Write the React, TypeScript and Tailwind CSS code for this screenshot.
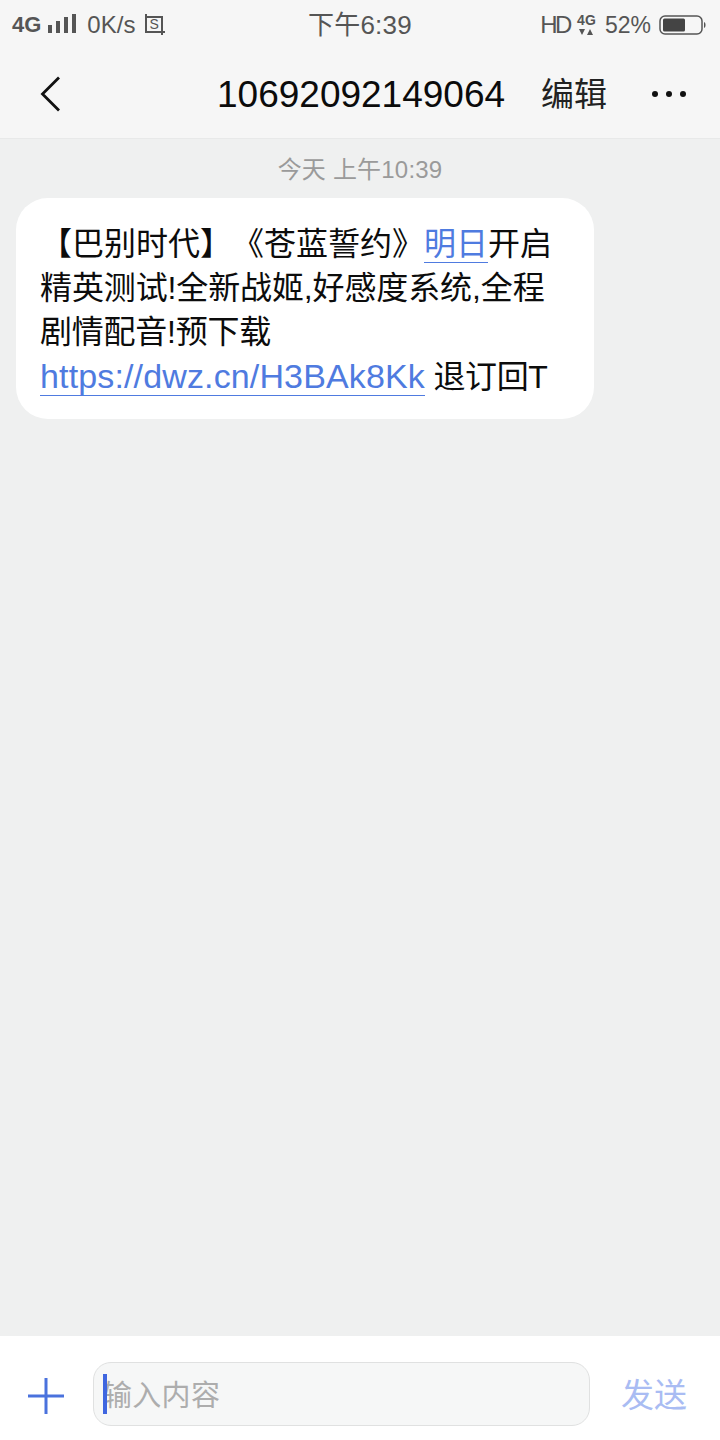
const cjk = "font-['Liberation_Sans','Noto_Sans_CJK_SC',sans-serif] [text-spacing-trim:space-all]";

function SignalBars() {
  return (
    <svg width="29" height="22" viewBox="0 0 29 22" className="fill-[#555555]">
      <rect x="0" y="11" width="4" height="8" />
      <rect x="8" y="7" width="4" height="12" />
      <rect x="16" y="3" width="4" height="16" />
      <rect x="24" y="0" width="4" height="19" />
    </svg>
  );
}

function SimIcon() {
  return (
    <svg width="22" height="24" viewBox="0 0 22 24" fill="none" className="stroke-[#555555]">
      <path d="M2 1v18h19M1 4h17v18" strokeWidth="2" />
      <text x="5.500" y="16" fontSize="14" fontFamily="Liberation Sans" fill="#555555" stroke="none">S</text>
    </svg>
  );
}

function NetworkIcon() {
  return (
    <div className="flex flex-col items-center w-[19px] gap-[3px]">
      <span className="text-[14px] leading-[12px] font-bold text-[#555555]">4G</span>
      <svg width="14" height="7" viewBox="0 0 14 7" className="fill-[#555555]">
        <path d="M0 0h6L3 6zM8 6h6L11 0z" />
      </svg>
    </div>
  );
}

function Battery() {
  return (
    <svg width="48" height="22" viewBox="0 0 48 22" fill="none">
      <rect x="1" y="2" width="42" height="18" rx="5" stroke="#555555" strokeWidth="1.5" />
      <rect x="4" y="4.500" width="22" height="13" rx="1.500" fill="#444444" />
      <path d="M45 8c2 .5 2 5.500 0 6z" fill="#555555" />
    </svg>
  );
}

function StatusBar() {
  return (
    <div className="relative flex items-center justify-between h-[50px] pl-[12px] pr-[13px] text-[#555555]">
      <div className="flex items-center">
        <span className="text-[22px] leading-none font-bold">4G</span>
        <div className="ml-[7px] flex"><SignalBars /></div>
        <span className="ml-[10px] text-[24px] leading-none">0K/s</span>
        <div className="ml-[9px] flex"><SimIcon /></div>
      </div>
      <span className="absolute left-[308px] top-[10px] text-[26px] leading-[30px] tracking-[0.2px]">下午6:39</span>
      <div className="flex items-center">
        <span className="text-[24px] leading-none tracking-[-2.5px]">HD</span>
        <div className="ml-[7px]"><NetworkIcon /></div>
        <span className="ml-[9px] text-[23px] leading-none">52%</span>
        <div className="ml-[8px] flex"><Battery /></div>
      </div>
    </div>
  );
}

function Header() {
  return (
    <div className="flex items-center h-[89px] border-b border-[#e8e9e9]">
      <svg width="24" height="38" viewBox="0 0 24 38" fill="none" className="ml-[39px] stroke-[#111111]">
        <path d="M20 2.500 3.500 19 20 35.500" strokeWidth="2.800" />
      </svg>
      <span className="ml-[154px] mt-[2px] w-[288px] text-[37px] leading-[44px] text-[#0b0b0b]">10692092149064</span>
      <span className="ml-[36px] mt-[2px] text-[33px] leading-[44px] text-[#222222]">编辑</span>
      <div className="ml-[45px] flex gap-[8px]">
        <span className="size-[6px] rounded-full bg-[#111111]" />
        <span className="size-[6px] rounded-full bg-[#111111]" />
        <span className="size-[6px] rounded-full bg-[#111111]" />
      </div>
    </div>
  );
}

function Bubble() {
  return (
    <div className="mt-[11px] ml-[16px] w-[578px] h-[221px] rounded-[32px] bg-white pl-[24px] pt-[24px] text-[32px] leading-[44px] text-[#0c0c0c]">
      <div className="whitespace-nowrap">
        【巴别时代】《苍蓝誓约》<span className="text-[#4f7be0] border-b border-[#4f7be0]">明日</span>开启
      </div>
      <div className="whitespace-nowrap tracking-[-0.12px]">精英测试!全新战姬,好感度系统,全程</div>
      <div className="whitespace-nowrap tracking-[-0.25px]">剧情配音!预下载</div>
      <div className="whitespace-nowrap">
        <span className="text-[34px] tracking-[0.14px] text-[#4f7be0] border-b border-[#4f7be0]">https://dwz.cn/H3BAk8Kk</span>
        <span className="tracking-[-0.4px]"> 退订回T</span>
      </div>
    </div>
  );
}

function Composer() {
  return (
    <div className="flex items-center h-[104px] bg-white pt-[15px]">
      <svg width="36" height="36" viewBox="0 0 36 36" className="ml-[28px] stroke-[#4a72dd]" fill="none">
        <path d="M0 18h36M18 0v36" strokeWidth="3" />
      </svg>
      <div className="ml-[29px] flex items-center w-[497px] h-[64px] -mt-[4px] rounded-[18px] border border-[#e0e1e1] bg-[#f6f7f7] pl-[9px]">
        <span className="w-[4px] h-[40px] bg-[#3f66e0] z-10" />
        <span className="-ml-[4px] mt-[4px] text-[29px] tracking-[0.3px] leading-[40px] text-[#adadad]">输入内容</span>
      </div>
      <span className="ml-[31px] mt-[1px] text-[33px] leading-[44px] text-[#a9bcf3]">发送</span>
    </div>
  );
}

export default function App() {
  return (
    <div className={`flex flex-col w-[720px] h-[1440px] overflow-hidden bg-[#eff0f0] ${cjk}`}>
      <div className="bg-[#f6f6f6]">
        <StatusBar />
        <Header />
      </div>
      <div className="flex-1">
        <div className="mt-[14px] text-center text-[24px] tracking-[0.2px] leading-[34px] text-[#9a9a9a]">今天 上午10:39</div>
        <Bubble />
      </div>
      <Composer />
    </div>
  );
}
